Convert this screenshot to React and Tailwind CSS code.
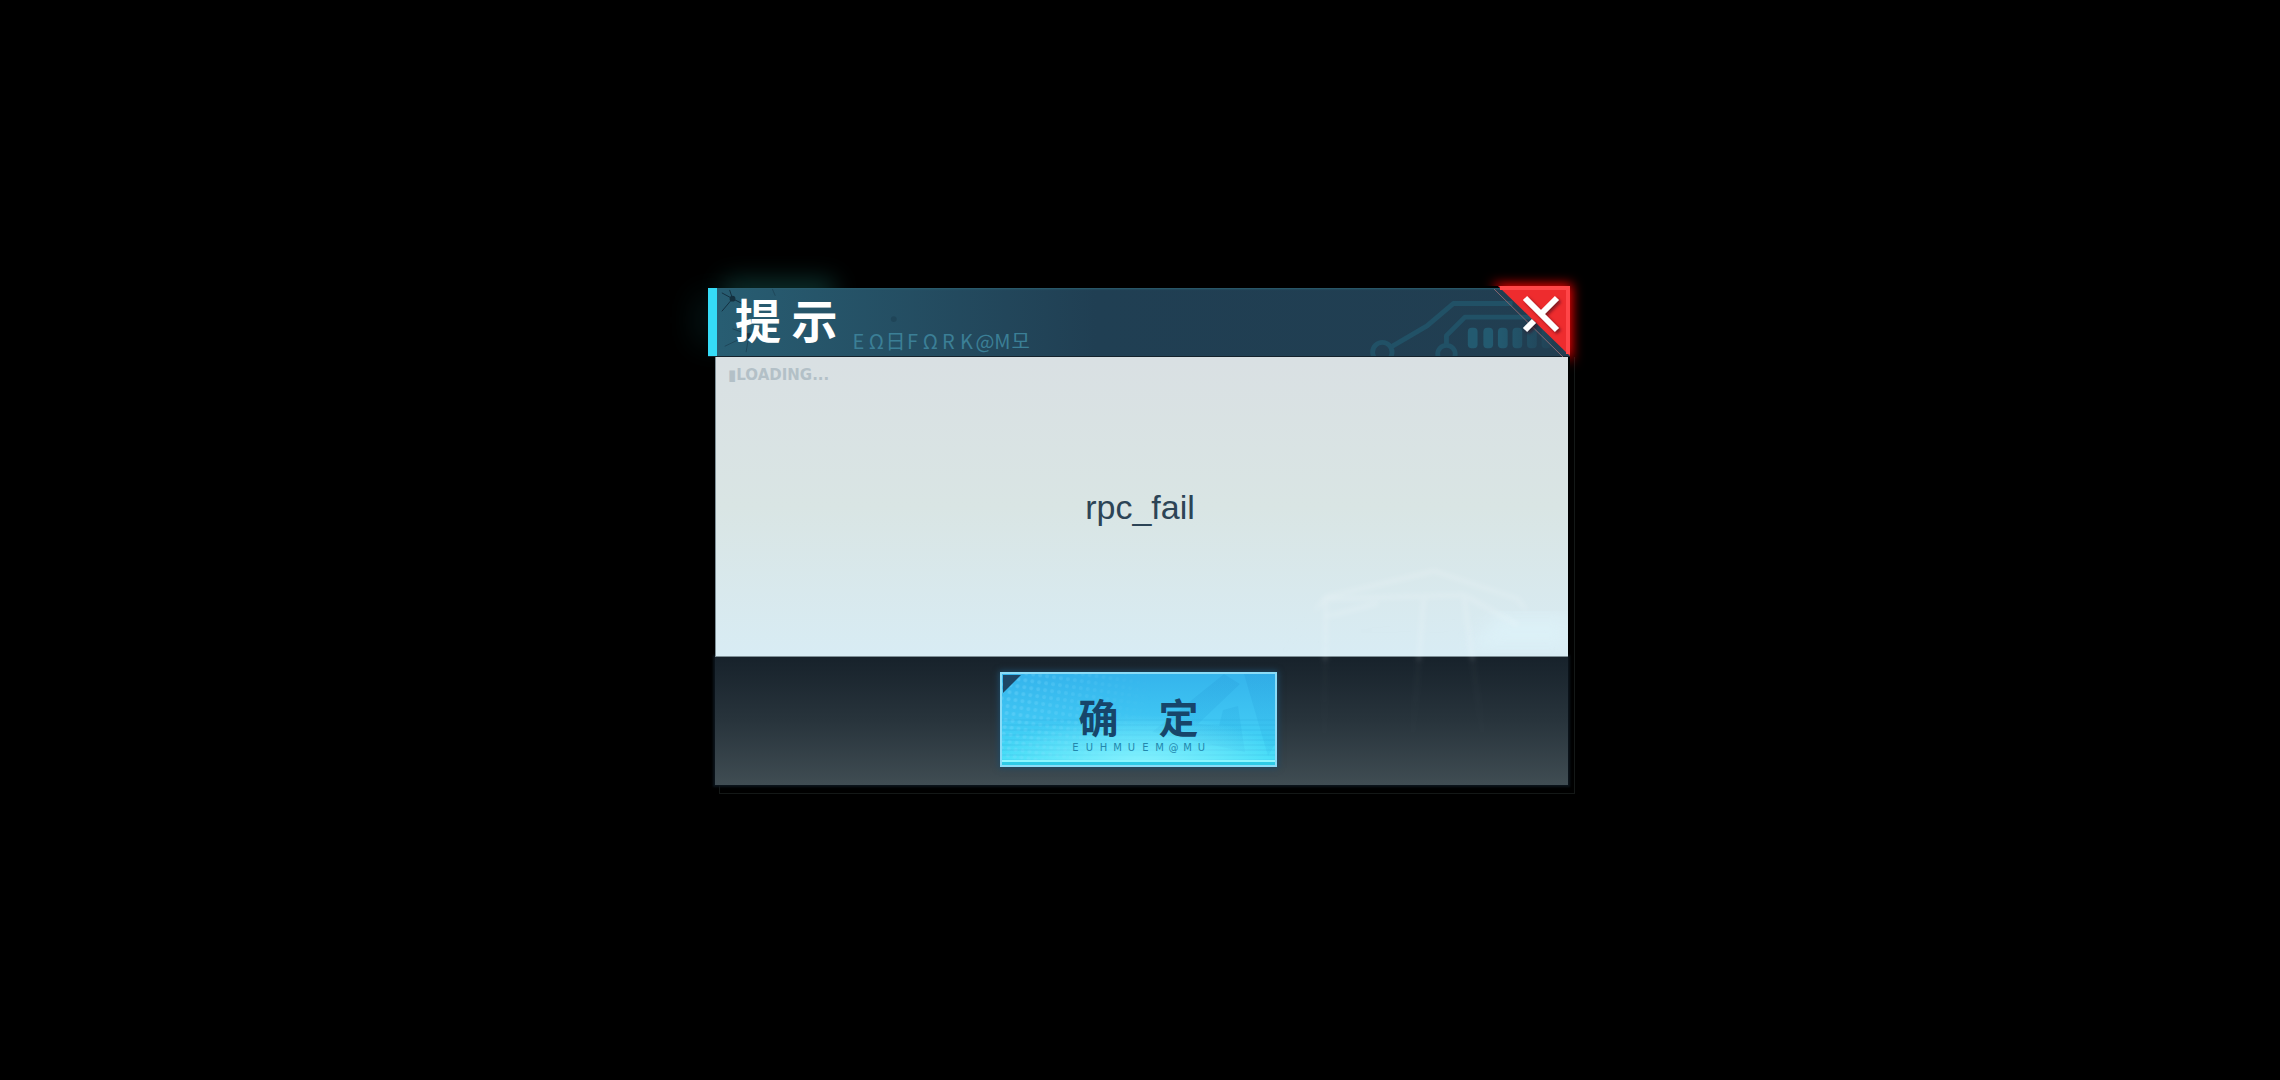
import React, { useState } from 'react';

const TITLE_RUNES = ['E', 'Ω', '日', 'F', 'Ω', 'R', 'K', '@', 'M', '모'];
const BUTTON_RUNES = ['E', 'U', 'H', 'M', 'U', 'E', 'M', '@', 'M', 'U'];

// Circuit board drawing at the right end of the title bar
const CircuitArt = () => (
    <svg viewBox="0 0 216 70" className="absolute right-0 top-0 h-full w-[216px]" fill="none" aria-hidden="true">
        <defs>
            <linearGradient id="pills" x1="110" x2="200" y1="0" y2="0" gradientUnits="userSpaceOnUse">
                <stop offset="0.4" stopColor="#235a70" />
                <stop offset="1" stopColor="#235a70" stopOpacity="0.15" />
            </linearGradient>
        </defs>
        <g stroke="#215166" strokeWidth="5" strokeLinejoin="round">
            <circle cx="26" cy="66" r="10" />
            <path d="M36 60 L72 39 L99 16 H160" />
            <circle cx="92" cy="68" r="9" />
            <path d="M92 58 V49 L111 30 H180" />
        </g>
        <g fill="url(#pills)">
            <rect x="114" y="41" width="10" height="21" rx="4" />
            <rect x="130" y="41" width="10" height="21" rx="4" />
            <rect x="145" y="41" width="10" height="21" rx="4" />
            <rect x="160" y="41" width="10" height="21" rx="4" />
            <rect x="175" y="41" width="10" height="21" rx="4" />
            <rect x="190" y="41" width="10" height="21" rx="4" />
        </g>
    </svg>
);

// Ink specks behind the title
const SpeckArt = () => (
    <svg viewBox="0 0 220 70" className="absolute left-0 top-0 h-full w-[220px]" fill="none" aria-hidden="true">
        <g stroke="#14303f" strokeWidth="1">
            <path d="M11 5 L22 11 L19 2 M22 11 L11 24 M22 11 L34 17" />
            <path d="M39 48 L36 66 M39 48 L22 42 M39 48 L14 60" opacity="0.5" />
            <path d="M66 8 L63 1" opacity="0.4" />
        </g>
        <circle cx="22" cy="11" r="3" fill="#14303f" />
        <circle cx="39" cy="49" r="3" fill="#14303f" opacity="0.7" />
        <circle cx="188" cy="32" r="3" fill="#14303f" opacity="0.3" />
    </svg>
);

// Faint wireframe that runs from the body down into the footer
const WireframeArt = () => (
    <svg viewBox="0 0 300 220" className="pointer-events-none absolute bottom-0 right-0 w-[300px]" fill="none" aria-hidden="true">
        <defs>
            <filter id="soft"><feGaussianBlur stdDeviation="2" /></filter>
            <filter id="haze"><feGaussianBlur stdDeviation="8" /></filter>
            <clipPath id="bodyPart"><rect y="-20" width="300" height="111" /></clipPath>
            <linearGradient id="fade" x1="0" x2="0" y1="0" y2="1">
                <stop offset="0" stopColor="#ffffff" stopOpacity="0.14" />
                <stop offset="0.42" stopColor="#ffffff" stopOpacity="0.12" />
                <stop offset="0.45" stopColor="#ffffff" stopOpacity="0.02" />
                <stop offset="1" stopColor="#ffffff" stopOpacity="0" />
            </linearGradient>
        </defs>
        <g clipPath="url(#bodyPart)">
            <path d="M230 50 H300 V84 H200 Z" fill="#dff4fb" opacity="0.6" filter="url(#haze)" />
        </g>
        <g stroke="url(#fade)" strokeWidth="5" filter="url(#soft)">
            <path d="M12 92 L58 32 L166 6 L250 34 L290 92" />
            <path d="M58 34 L196 30 L250 60 M58 34 L56 180 M156 30 L144 180 M196 32 L216 180" />
            <path d="M58 52 L110 38 M60 70 L200 58 L150 70" />
        </g>
    </svg>
);

const Runes = ({ chars, className, cellClassName }) => (
    <div className={`flex ${className}`} aria-hidden="true">
        {chars.map((char, index) => (
            <span key={index} className={`text-center ${cellClassName}`}>{char}</span>
        ))}
    </div>
);

const CloseButton = ({ onClick }) => (
    <button type="button" aria-label="关闭" onClick={onClick} className="absolute right-0 -top-[2px] h-[72px] w-[76px] cursor-pointer">
        <svg viewBox="0 0 76 72" className="h-full w-full overflow-visible" fill="none">
            <defs>
                <filter id="redGlow" x="-50%" y="-50%" width="200%" height="200%"><feGaussianBlur stdDeviation="6" /></filter>
                <filter id="crossShadow" x="-50%" y="-50%" width="200%" height="200%"><feGaussianBlur stdDeviation="1.5" /></filter>
                <clipPath id="outside"><path d="M-30 -30 H106 V102 H76 V0 H-30 Z" /></clipPath>
            </defs>
            <g clipPath="url(#outside)">
                <path d="M2 0 H76 V72 Z" fill="#ff0000" stroke="#ff0000" strokeWidth="4" filter="url(#redGlow)" />
            </g>
            <path d="M4 0 H76 V70 Z" fill="#ee2c2e" />
            <path d="M6 2 H74 V68" stroke="#ff4548" strokeWidth="4" />
            <path d="M0 3 L70 72" stroke="#8a6670" strokeWidth="1" />
            <g stroke="#3a0a14" strokeWidth="6" opacity="0.6" filter="url(#crossShadow)" transform="translate(2 2)">
                <path d="M31 12 L63 44 M63 12 L47 28 M40 35 L31 44" />
            </g>
            <path d="M31 12 L63 44 M63 12 L47 28 M40 35 L31 44" stroke="#ffffff" strokeWidth="6" />
        </svg>
    </button>
);

const ConfirmButton = ({ onClick }) => (
    <button
        type="button"
        onClick={onClick}
        className="relative flex w-[277px] cursor-pointer flex-col items-center overflow-hidden border-2 border-[#8adcf7] bg-linear-to-b from-[#35b4ec] via-[#3fc6f3] to-[#45e2f8] pt-[22px] pb-3 shadow-[0_0_6px_1px_#1d4a66]"
    >
        <svg viewBox="0 0 273 91" preserveAspectRatio="none" className="absolute inset-0 h-full w-full" fill="none" aria-hidden="true">
            <defs>
                <pattern id="dots" width="7" height="7" patternUnits="userSpaceOnUse" patternTransform="rotate(8)">
                    <circle cx="3" cy="3" r="2" fill="#7fdcff" />
                </pattern>
                <pattern id="scan" width="4" height="5" patternUnits="userSpaceOnUse">
                    <rect width="4" height="2" fill="#2aa8dc" />
                </pattern>
                <linearGradient id="dotFade" x1="0" x2="1" y1="0" y2="0">
                    <stop offset="0" stopColor="#fff" stopOpacity="0.35" />
                    <stop offset="1" stopColor="#fff" stopOpacity="0" />
                </linearGradient>
                <mask id="dotMask"><rect width="150" height="91" fill="url(#dotFade)" /></mask>
                <radialGradient id="shine" cx="0.5" cy="1" r="0.55">
                    <stop offset="0" stopColor="#8ff4ff" stopOpacity="0.9" />
                    <stop offset="1" stopColor="#8ff4ff" stopOpacity="0" />
                </radialGradient>
                <linearGradient id="mark" x1="0" x2="0" y1="0" y2="1">
                    <stop offset="0" stopColor="#2a9fdc" stopOpacity="0.6" />
                    <stop offset="1" stopColor="#2ab4e6" stopOpacity="0.35" />
                </linearGradient>
            </defs>
            <rect width="150" height="91" fill="url(#dots)" mask="url(#dotMask)" />
            <path d="M222 0 L150 58 L243 78 L236 32 L221 36 L217 52 L196 50 L238 10 Z" fill="url(#mark)" opacity="0.6" />
            <path d="M242 0 H273 V70 L266 82 Z" fill="url(#mark)" opacity="0.6" />
            <rect y="44" width="273" height="46" fill="url(#scan)" opacity="0.18" />
            <rect width="273" height="91" fill="url(#shine)" />
            <path d="M1 1 H19 L1 19 Z" fill="#1d4666" />
            <rect y="86" width="273" height="2" fill="#8cf6ff" />
            <rect y="88" width="273" height="3" fill="#2fcbe6" />
        </svg>
        <span className="relative text-[40px] leading-10 font-bold text-[#17456a]">确　定</span>
        <Runes chars={BUTTON_RUNES} className="relative mt-[7px] font-['DejaVu_Sans'] text-[10px] leading-[10px] text-[#2387ad]" cellClassName="w-[14px]" />
    </button>
);

const TipDialog = ({ message, onClose }) => (
    <section role="dialog" aria-labelledby="tip-title" className="relative w-full max-w-[862px]">
        <header className="relative flex items-end border-b border-[#14222c] bg-linear-to-r from-[#285e73] via-[#203f53] via-45% to-[#213e51] pt-2 pb-[15px] pl-[27px] shadow-[inset_0_1px_2px_#2c5f70]">
            <div className="absolute -top-2 left-4 -z-10 h-6 w-[110px] bg-[#1c6a62] opacity-50 blur-md" />
            <div className="absolute -left-3 top-2 -z-10 h-12 w-8 bg-[#114a4c] opacity-30 blur-lg" />
            <SpeckArt />
            <CircuitArt />
            <div className="absolute left-0 top-0 h-full w-[9px] bg-[#35dcf8]" />
            <h1 id="tip-title" className="relative text-[46px] leading-[45px] font-bold text-white">提 示</h1>
            <Runes chars={TITLE_RUNES} className="relative -mb-3 ml-3 text-[20px] leading-6 text-[#3b7f96]" cellClassName="w-[18px]" />
            <CloseButton onClick={onClose} />
        </header>

        <div className="relative ml-[7px] mr-[2px]">
            {/* outer hairline frame */}
            <div className="absolute -right-[7px] -bottom-[9px] top-0 left-1 -z-10 border-r border-b border-l border-[#141817]" />
            <div className="relative flex min-h-[300px] items-center justify-center border-l border-b border-[#7f9097] bg-linear-to-b from-[#d9e0e3] via-[#d9e5e4] to-[#d8ecf4]">
                <p className="absolute left-3 top-2 font-['DejaVu_Sans'] text-[15px] leading-5 font-bold text-[#b3c0c7]">▮LOADING...</p>
                <p className="pt-[2px] pr-1 font-['Liberation_Sans'] text-[34px] leading-10 text-[#2c4456]">{message}</p>
            </div>
            <footer className="flex justify-center bg-linear-to-b from-[#17222b] via-[#28343c] to-[#404d53] pt-[15px] pr-[6px] pb-[18px] shadow-[0_0_2px_2px_#0b141b]">
                <ConfirmButton onClick={onClose} />
            </footer>
            <WireframeArt />
        </div>
    </section>
);

const App = () => {
    const [isOpen, setIsOpen] = useState(true);

    return (
        <main
            lang="zh-CN"
            className="relative isolate flex min-h-screen items-center justify-center bg-black pr-[18px] pb-2 pl-4 font-['Noto_Sans_CJK_SC','DejaVu_Sans',sans-serif]"
        >
            {isOpen && <TipDialog message="rpc_fail" onClose={() => setIsOpen(false)} />}
        </main>
    );
};

export default App;
